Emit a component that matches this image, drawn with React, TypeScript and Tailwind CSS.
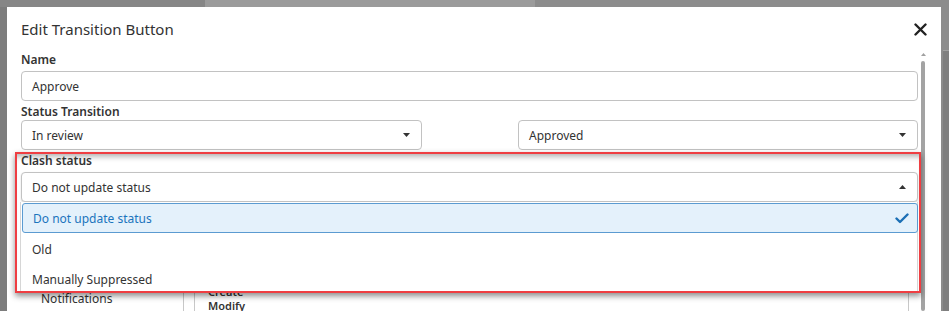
const font = { fontFamily: '"Noto Sans", "Open Sans", Arial, sans-serif' };

function Caret({ up = false }: { up?: boolean }) {
  return (
    <svg width="7" height="4" viewBox="0 0 7 4" className="shrink-0">
      {up ? <path d="M0 4 L3.5 0 L7 4 Z" fill="#333" /> : <path d="M0 0 L7 0 L3.5 4 Z" fill="#333" />}
    </svg>
  );
}

function SelectBox({ value, up = false, className = "" }: { value: string; up?: boolean; className?: string }) {
  return (
    <div
      className={`flex h-[30px] items-center justify-between rounded-[4px] border border-[#c2c2c2] bg-white pl-[10px] pr-[11px] text-[12px] text-[#333] ${className}`}
    >
      <span className="pt-[2px]">{value}</span>
      <Caret up={up} />
    </div>
  );
}

export default function App() {
  return (
    <div className="flex h-[311px] w-[949px] flex-col overflow-hidden bg-[#8b8b8b]" style={font}>
      <div className="flex h-[7px] shrink-0">
        <div className="w-[205px] bg-[#868686]" />
        <div className="w-[330px] bg-[#9b9b9b]" />
        <div className="flex-1 bg-[#8c8c8c]" />
      </div>

      <div className="flex flex-1">
        <div className="w-[7px] shrink-0 bg-[#7d7d7d]" />

        <div className="flex w-[934px] shrink-0 flex-col bg-white">
          <div className="flex h-[45px] shrink-0 items-center justify-between pl-[14px] pr-[14px]">
            <h1 className="-mt-[2px] text-[15px] leading-[22px] text-[#333]">Edit Transition Button</h1>
            <svg width="13" height="13" viewBox="0 0 13 13">
              <path d="M1.5 1.5 L11.5 11.5 M11.5 1.5 L1.5 11.5" stroke="#222" strokeWidth="2.4" strokeLinecap="round" />
            </svg>
          </div>

          <div className="flex flex-1">
            <div className="ml-[14px] flex w-[897px] shrink-0 flex-col">
              <div className="text-[12px] font-semibold leading-[16px] text-[#333]">Name</div>
              <div className="mt-[3px] flex h-[30px] items-center rounded-[4px] border border-[#c2c2c2] pl-[10px] pt-[2px] text-[12px] text-[#333]">
                Approve
              </div>

              <div className="mt-[3px] text-[12px] font-semibold leading-[16px] text-[#333]">Status Transition</div>
              <div className="flex justify-between">
                <SelectBox value="In review" className="w-[401px]" />
                <SelectBox value="Approved" className="w-[400px]" />
              </div>

              <div className="relative z-10 mt-[2px] -ml-[6px] h-[141px] w-[906px] shrink-0 overflow-hidden border-2 border-[#ef3e42] bg-white shadow-[0_3px_6px_rgba(0,0,0,0.45)]">
                <div className="h-full shadow-[inset_0_7px_6px_-5px_rgba(0,0,0,0.35)]">
                  <div className="pl-[4px] pt-[1px] text-[12px] font-semibold leading-[12px] text-[#333]">Clash status</div>
                  <div className="mt-[5px] pl-[4px]">
                    <SelectBox value="Do not update status" up className="w-[897px] shadow-[0_1px_2px_rgba(0,0,0,0.15)]" />
                  </div>
                  <div className="ml-[3px] w-[898px] border-x border-[#d6d6d6] bg-white pt-[1px]">
                    <div className="ml-[1px] flex h-[30px] w-[896px] items-center justify-between rounded-[3px] border border-[#5b9bd1] bg-[#e4f1fb] pl-[10px] pr-[8px] text-[12px] text-[#1b74bd]">
                      <span className="pt-[2px]">Do not update status</span>
                      <svg width="14" height="11" viewBox="0 0 14 11">
                        <path d="M1.5 5.5 L5 9 L12.5 1.5" fill="none" stroke="#1b6fb5" strokeWidth="2.4" strokeLinecap="round" strokeLinejoin="round" />
                      </svg>
                    </div>
                    <div className="mt-[1px] flex h-[30px] items-center pl-[11px] pt-[2px] text-[12px] text-[#333]">Old</div>
                    <div className="flex h-[30px] items-center pl-[11px] pt-[2px] text-[12px] text-[#333]">Manually Suppressed</div>
                  </div>
                </div>
              </div>

              <div className="flex h-[18px] shrink-0">
                <div className="w-[162px] shrink-0 pl-[20px] text-[12px] leading-[14px] text-[#333]">
                  <div className="-mt-[1px]">Notifications</div>
                </div>
                <div className="w-[11px] shrink-0 border-l border-[#c8c8c8]" />
                <div className="flex flex-1 border-l border-[#c8c8c8] pl-[13px]">
                  <div className="-mt-[8px] flex flex-1 flex-col text-[11px] font-semibold leading-[14px] text-[#333]">
                    <span>Create</span>
                    <span>Modify</span>
                  </div>
                </div>
                <div className="w-[10px] shrink-0 border-l border-[#c8c8c8]" />
              </div>
            </div>

            <div className="ml-[3px] flex w-[4px] shrink-0 flex-col items-center">
              <svg width="5" height="3" viewBox="0 0 5 3" className="mt-[1px]">
                <path d="M0 3 L2.5 0 L5 3 Z" fill="#a0a0a0" />
              </svg>
              <div className="mt-[5px] w-[4px] flex-1 rounded-full bg-[#a3a3a3]" />
            </div>
          </div>
        </div>

        <div className="flex w-[8px] shrink-0 flex-col bg-[#8c8c8c]">
          <div className="h-[43px]" />
          <div className="ml-[2px] flex-1 border-t border-[#a0a0a0] bg-[#7f7f7f]" />
        </div>
      </div>
    </div>
  );
}
